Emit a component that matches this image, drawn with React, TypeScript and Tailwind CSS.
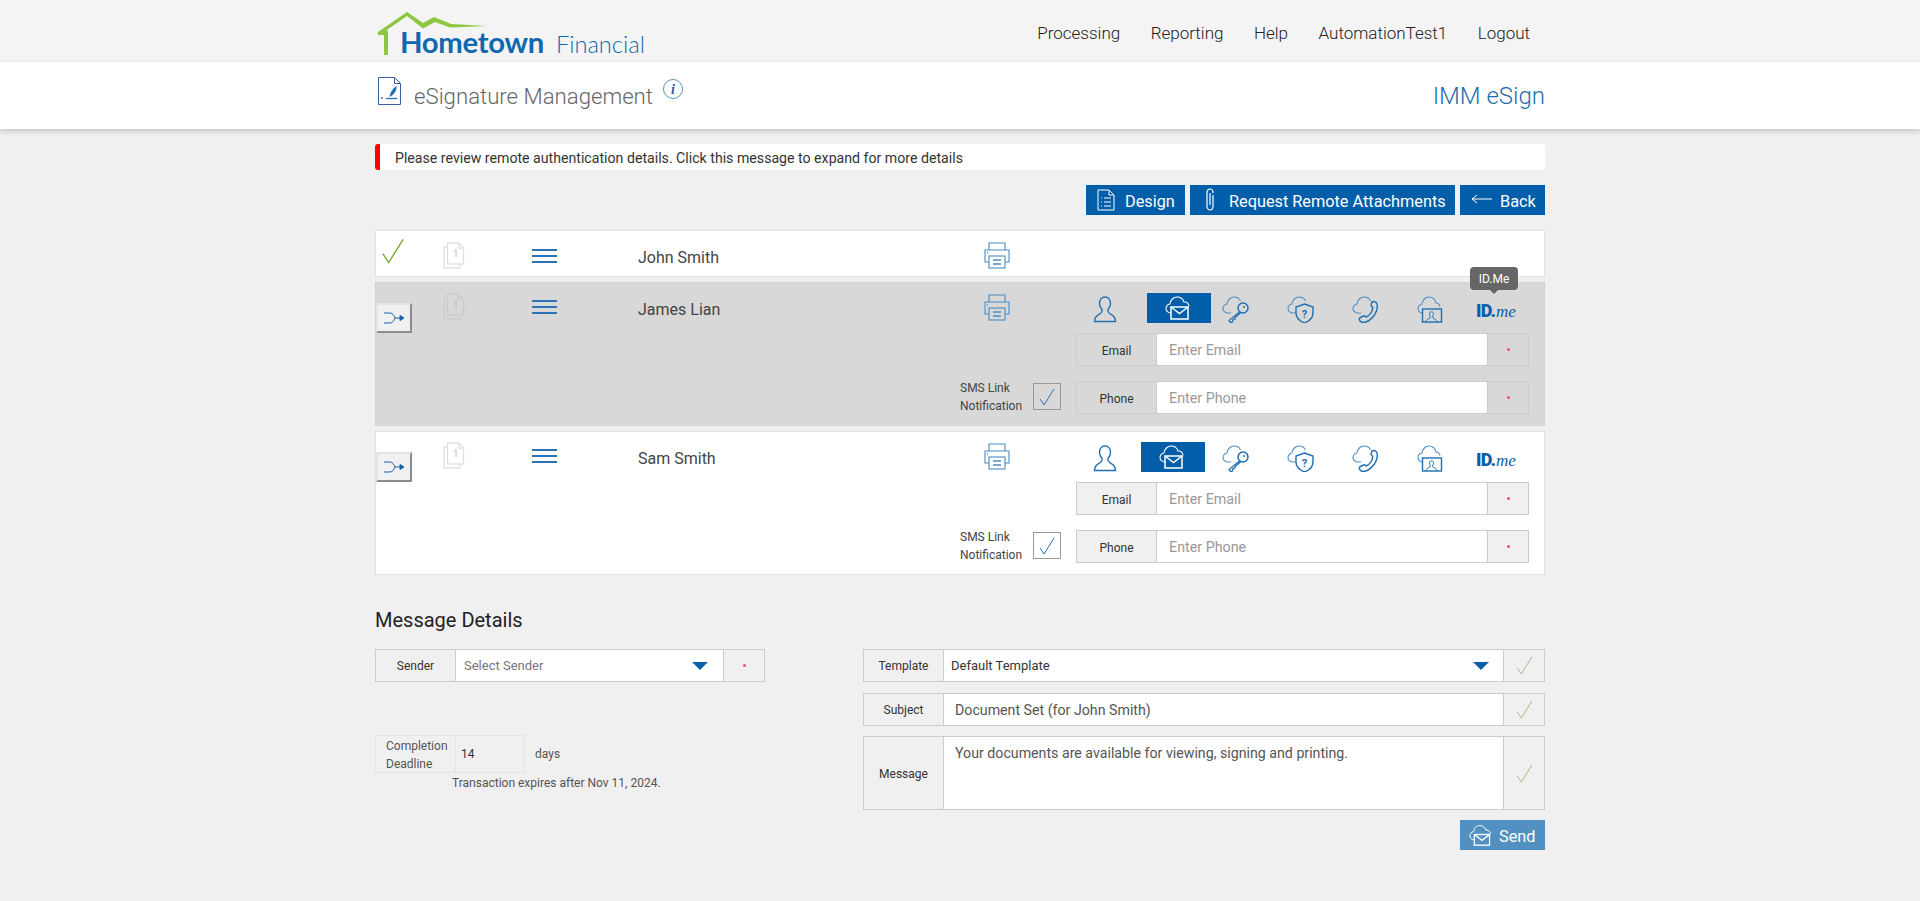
import React from 'react';

const BLUE = '#1f6fb2';
const CLOUD = '#4f8fc6';

const Doc1 = ({ color = '#e2e2e2', digit = '#d4d4d4' }: { color?: string; digit?: string }) => (
  <svg width="22" height="27" viewBox="0 0 22 27" fill="none" stroke={color} strokeWidth="1.3">
    <path d="M4.500 1h11l5 5v16h-16z" />
    <path d="M15.500 1v5h5" />
    <path d="M4.500 5H1v21h16v-4" />
    <text x="12.500" y="15" textAnchor="middle" fontSize="10" fontWeight="700" fill={digit} stroke="none" fontFamily="Roboto">1</text>
  </svg>
);

const Menu = () => (
  <div className="flex w-[25px] flex-col gap-[4px]">
    <div className="h-[2px] bg-[#2a74b5]" />
    <div className="h-[2px] bg-[#2a74b5]" />
    <div className="h-[2px] bg-[#2a74b5]" />
  </div>
);

const Printer = () => (
  <svg width="26" height="27" viewBox="0 0 26 27" fill="none" stroke="#4a8cc4" strokeWidth="1.1">
    <path d="M5 8V1h16v7" />
    <path d="M5 20H1V8h24v12h-4" />
    <rect x="5" y="14" width="16" height="12" />
    <path d="M9 18h8M9 22h8" strokeWidth="1.500" />
    <path d="M3 11h1" strokeWidth="1.500" />
  </svg>
);

const Route = () => (
  <div className="flex h-[30px] w-[36px] items-center justify-center border-2 border-t-[#e4e4e4] border-l-[#e4e4e4] border-r-[#8c8c8c] border-b-[#8c8c8c] bg-[#f0f0f0]">
    <svg width="22" height="12" viewBox="0 0 22 12" fill="none" stroke="#1a63aa" strokeWidth="1">
      <path d="M1 1h6c3 0 4 3 5 5-1 2-2 5-5 5H1" />
      <path d="M12 6h6" />
      <path d="M17 3.500l4 2.500-4 2.500z" fill="#1a63aa" />
    </svg>
  </div>
);

const Person = () => (
  <svg width="24" height="30" viewBox="0 0 24 30" fill="none" stroke={BLUE} strokeWidth="1.400">
    <path d="M12 4C8.500 4 6.500 7 6.500 10.500c0 2.500 1 4.500 2.500 6 .4 2-.5 3.500-3 4.800-2.500 1.300-4.500 2.700-4.500 7.200h21c0-4.500-2-5.900-4.500-7.200-2.500-1.300-3.400-2.800-3-4.800 1.500-1.500 2.500-3.500 2.500-6C17.500 7 15.500 4 12 4z" />
  </svg>
);

const Cloud = () => (
  <path d="M9 20H5.500C3 20 1 18 1 15.500S3 11 5 11C5.500 7 8.500 4 12 4c3 0 5.500 1.500 6.500 4" stroke={CLOUD} strokeWidth="1.100" fill="none" />
);

const CloudMail = ({ color = BLUE, fill = 'none', size = 28 }: { color?: string; fill?: string; size?: number }) => (
  <svg width={size} height={(size * 30) / 28} viewBox="0 0 28 30" fill="none">
    <path d="M6 20C3 20 1 18 1 15.500S3 11 5 11C5.500 7 8.500 4 12 4c3.500 0 6 2 7 5 3-.5 5 2 5 4.500" stroke={color} strokeWidth="1.100" />
    <rect x="6" y="14" width="17" height="12" stroke={color} strokeWidth="1.500" fill={fill} />
    <path d="M6 14l8.500 6.500L23 14" stroke={color} strokeWidth="1.500" />
  </svg>
);

const CloudKey = () => (
  <svg width="28" height="30" viewBox="0 0 28 30" fill="none">
    <Cloud />
    <circle cx="21" cy="15" r="5" stroke={BLUE} strokeWidth="1.500" />
    <circle cx="22" cy="14" r="1" fill={BLUE} />
    <path d="M17.500 19L7 27.500 8.500 29.500l2-.5.5-2.500 2-.5.500-2 5-4" stroke={BLUE} strokeWidth="1.300" />
  </svg>
);

const CloudShield = () => (
  <svg width="28" height="30" viewBox="0 0 28 30" fill="none">
    <Cloud />
    <path d="M17.500 11l8.500 3v6c0 5-3.500 8-8.500 10C12.500 28 9 25 9 20v-6z" stroke={BLUE} strokeWidth="1.400" />
    <text x="17.500" y="25" textAnchor="middle" fontSize="11" fontWeight="700" fill={BLUE} fontFamily="Roboto">?</text>
  </svg>
);

const CloudPhone = () => (
  <svg width="28" height="30" viewBox="0 0 28 30" fill="none">
    <Cloud />
    <path d="M20 9c2-1 3.500-.5 4.500 1 1.500 3 1 7-2 12-3 4-7 7-11 7.500-2 0-3.500-1-4-2.500-.5-1 0-2 1-2.500l3-1.500c1-.5 2 0 2.500 1 2-.5 4-2.500 5.500-5 1-2 1.500-3.500 1-5-1-.5-1.500-1-1.500-2z" stroke={BLUE} strokeWidth="1.400" />
  </svg>
);

const CloudUser = () => (
  <svg width="28" height="30" viewBox="0 0 28 30" fill="none">
    <path d="M5 20C3 19.500 1 18 1 15.500S3 11 5 11C5.500 7 8.500 4 12 4c3.500 0 6 2 7 6 2 0 3.500 1.500 4 3.500" stroke={CLOUD} strokeWidth="1.100" />
    <rect x="5.500" y="16" width="19" height="13" stroke={BLUE} strokeWidth="1.400" />
    <path d="M9 29c0-2.500 2-3 4-4 .5-.7.5-1 0-2-.6-1-.7-2.500-.2-3.500.5-.8 2.800-.8 3.300 0 .5 1 .4 2.500-.2 3.500-.5 1-.5 1.300 0 2 2 1 4 1.500 4 4" stroke={BLUE} strokeWidth="1" />
  </svg>
);

const IdMe = () => (
  <div className="mt-[6px] flex items-baseline text-[#0b5ea8]">
    <span className="text-[18px] font-black leading-none tracking-[-0.8px]">ID.</span>
    <span className="ml-[1px] font-['Liberation_Serif',serif] text-[17px] font-normal italic leading-none">me</span>
  </div>
);

const Check = ({ size = 19, color = '#a4b98a', weight = 1 }: { size?: number; color?: string; weight?: number }) => (
  <svg width={size} height={size} viewBox="0 0 18 18" fill="none" stroke={color} strokeWidth={(18 / size) * weight}>
    <path d="M2 11l4 6L16 1" />
  </svg>
);

const Dot = () => <div className="h-[3px] w-[3px] rounded-full bg-[#e8506c]" />;

const Caret = () => (
  <div className="h-0 w-0 border-x-[8px] border-t-[8px] border-x-transparent border-t-[#0b5ea8]" />
);

const Field = ({ label, placeholder, active }: { label: string; placeholder: string; active: boolean }) => (
  <div className="flex h-[33px] border border-[#cccccc] text-[14.3px]">
    <div className={`flex w-[80px] items-center justify-center border-r border-[#cccccc] pt-[2px] text-[12px] text-[#333333] ${active ? '' : 'bg-[#f0f0f0]'}`}>{label}</div>
    <div className="flex flex-1 items-center bg-white pl-[12px] pt-[3px] text-[#999999]">{placeholder}</div>
    <div className={`flex w-[41px] items-center justify-center border-l border-[#cccccc] ${active ? '' : 'bg-[#f0f0f0]'}`}>
      <Dot />
    </div>
  </div>
);

const Signer = ({ name, active }: { name: string; active: boolean }) => (
  <div className={`flex h-[144px] border ${active ? 'border-[#d2d2d2] bg-[#d8d8d8]' : 'border-[#e0e0e0] bg-white'}`}>
    <div className="w-[67px] pt-[20px]">
      <Route />
    </div>
    <div className="w-[89px] pt-[10px]">
      {active ? <Doc1 color="#cccccc" digit="#c6c6c6" /> : <Doc1 />}
    </div>
    <div className="w-[106px] pt-[17px]">
      <Menu />
    </div>
    <div className="w-[346px] pt-[15px] text-[16px] leading-[24px] text-[#444444]">{name}</div>
    <div className="w-[28px] pt-[11px]">
      <Printer />
    </div>
    <div className="flex flex-1 flex-col pl-[64px] pr-[15px] pt-[10px]">
      <div className="relative flex h-[30px] items-center">
        <div className="ml-[17px]"><Person /></div>
        <div className={`flex h-[30px] w-[64px] items-center justify-center bg-[#025ea8] ${active ? 'ml-[30px]' : 'ml-[24px] mr-[6px]'}`}>
          <CloudMail color="#ffffff" fill="#025ea8" />
        </div>
        <div className="ml-[11px]"><CloudKey /></div>
        <div className="ml-[37px]"><CloudShield /></div>
        <div className="ml-[37px]"><CloudPhone /></div>
        <div className="ml-[37px]"><CloudUser /></div>
        <div className="ml-[31px]"><IdMe /></div>
        {active && (
          <div className="absolute left-[394px] top-[-26px] flex h-[23px] w-[48px] items-center justify-center rounded-[4px] bg-[#666666] text-[12px] text-white">
            ID.Me
            <div className="absolute bottom-[-4px] left-[20px] h-0 w-0 border-x-[4px] border-t-[4px] border-x-transparent border-t-[#666666]" />
          </div>
        )}
      </div>
      <div className="mt-[10px]">
        <Field label="Email" placeholder="Enter Email" active={active} />
      </div>
      <div className="relative mt-[15px]">
        <Field label="Phone" placeholder="Enter Phone" active={active} />
        <div className="absolute left-[-116px] top-[-2px] text-[12px] leading-[18px] text-[#444444]">
          SMS Link
          <br />
          Notification
        </div>
        <div className="absolute left-[-43px] top-[2px] flex h-[27px] w-[28px] items-center justify-center border border-[#999999]">
          <Check size={18} color="#2a74b5" />
        </div>
      </div>
    </div>
  </div>
);

const MessageRow = ({ label, children, height = 33 }: { label: string; children: React.ReactNode; height?: number }) => (
  <div className="flex border border-[#cccccc]" style={{ height }}>
    <div className="flex w-[80px] items-center justify-center border-r border-[#cccccc] pt-[1px] text-[12px] text-[#333333]">{label}</div>
    <div className="flex-1 bg-white">{children}</div>
    <div className="flex w-[41px] items-center justify-center border-l border-[#cccccc]">
      <Check />
    </div>
  </div>
);

export default function App() {
  return (
    <div className="min-h-[901px] bg-[#f0f0f0] font-['Roboto',sans-serif]">
      {/* Top bar */}
      <div className="h-[62px] bg-[#f4f4f4]">
        <div className="mx-auto flex h-full w-[1170px] justify-between">
          <div className="relative ml-[3px] h-full w-[270px]">
            <svg className="absolute left-0 top-[11px]" width="110" height="46" viewBox="0 0 110 46" fill="none">
              <path d="M0 21L29 1l16 11 11-6 17 7 36 2-37 1.500-15-5.500-12 6.500L29 5 8 19.500h2V44H6V24H0z" fill="#8dc63f" />
            </svg>
            <div className="absolute left-[22px] top-[25px] flex items-baseline font-['Lato',sans-serif] leading-[34px] text-[#0f68b0]">
              <span className="text-[29.3px] font-bold tracking-[-0.3px]">Hometown</span>
              <span className="ml-[12px] text-[23.6px] font-light">Financial</span>
            </div>
          </div>
          <div className="flex items-start gap-[30.5px] pr-[15px] pt-[21px] text-[17px] font-light leading-[24px] text-[#222222]">
            <span>Processing</span>
            <span>Reporting</span>
            <span>Help</span>
            <span>AutomationTest1</span>
            <span>Logout</span>
          </div>
        </div>
      </div>

      {/* Title bar */}
      <div className="relative h-[67px] bg-white shadow-[0_2px_6px_rgba(0,0,0,0.2)]">
        <div className="mx-auto flex w-[1170px] justify-between">
          <div className="flex items-start">
            <svg className="ml-[3px] mt-[15px]" width="23" height="28" viewBox="0 0 23 28" fill="none">
              <path d="M.5.5h16l6 6v21H.5z" stroke="#3a5fa8" />
              <path d="M16.500.5v6h6" stroke="#3a5fa8" />
              <path d="M8 21.500h11" stroke="#1f6fb2" strokeWidth="1.300" />
              <path d="M11.500 20c.5-5 4-9 7-11 .5 4-2.500 9-7 11z" fill="#1f6fb2" />
              <path d="M3 20l2 2M5 20l-2 2" stroke="#555555" strokeWidth=".7" />
            </svg>
            <div className="ml-[13px] mt-[18px] text-[22.2px] font-light leading-[32px] text-[#666666]">eSignature Management</div>
            <div className="ml-[10px] mt-[17px] flex h-[20px] w-[20px] items-center justify-center rounded-full border border-[#5d93c4] font-['Liberation_Serif',serif] text-[14px] font-bold italic text-[#1f5f9f]">i</div>
          </div>
          <div className="mt-[17px] text-[24px] font-light leading-[34px] text-[#1f6cae]">IMM eSign</div>
        </div>
      </div>

      <div className="mx-auto w-[1170px]">
        {/* Alert */}
        <div className="mt-[15px] flex h-[26px] items-center rounded-[3px] border-l-[5px] border-[#ff0000] bg-white pl-[15px] pt-[4px] text-[14.15px] text-[#333333]">
          Please review remote authentication details. Click this message to expand for more details
        </div>

        {/* Action buttons */}
        <div className="mt-[15px] flex justify-end gap-[5px] text-[16.3px] text-white">
          <div className="flex h-[30px] w-[99px] items-center bg-[#025ea8] pl-[11px]">
            <svg width="18" height="22" viewBox="0 0 18 22" fill="none" stroke="#ffffff" strokeWidth="1">
              <path d="M1 1h11l5 5v15H1z" />
              <path d="M12 1v5h5" />
              <path d="M4 9h1M7 9h7M4 13h1M7 13h7M4 17h1M7 17h7" />
            </svg>
            <span className="ml-[10px] pt-[5px]">Design</span>
          </div>
          <div className="flex h-[30px] w-[265px] items-center bg-[#025ea8] pl-[15px]">
            <svg width="11" height="24" viewBox="0 0 11 24" fill="none" stroke="#ffffff" strokeWidth="1.200">
              <path d="M8 7v11c0 2-1 4-3 4s-3-2-3-4V5c0-2 1-4 3-4s3 2 3 4" />
              <path d="M5 5v12" />
            </svg>
            <span className="ml-[13px] whitespace-nowrap pt-[5px]">Request Remote Attachments</span>
          </div>
          <div className="flex h-[30px] w-[85px] items-center bg-[#025ea8] pl-[11px]">
            <svg width="21" height="12" viewBox="0 0 21 12" fill="none" stroke="#ffffff" strokeWidth="1">
              <path d="M21 5H1M6 1L1 5l5 4" />
            </svg>
            <span className="ml-[8px] pt-[5px]">Back</span>
          </div>
        </div>

        {/* Signers */}
        <div className="mt-[15px] flex h-[47px] border border-[#e0e0e0] bg-white">
          <div className="w-[67px] pl-[4px] pt-[7px]">
            <Check size={26} color="#74ad2f" weight={1.4} />
          </div>
          <div className="w-[89px] pt-[11px]">
            <Doc1 />
          </div>
          <div className="w-[106px] pt-[18px]">
            <Menu />
          </div>
          <div className="w-[346px] pt-[15px] text-[16px] leading-[24px] text-[#444444]">John Smith</div>
          <div className="pt-[11px]">
            <Printer />
          </div>
        </div>
        <div className="mt-[5px]">
          <Signer name="James Lian" active />
        </div>
        <div className="mt-[5px]">
          <Signer name="Sam Smith" active={false} />
        </div>

        {/* Message details */}
        <div className="mt-[30px] text-[20px] leading-[30px] text-[#222222]">Message Details</div>
        <div className="mt-[14px] flex justify-between">
          <div className="w-[390px]">
            <div className="flex h-[33px] border border-[#cccccc]">
              <div className="flex w-[80px] items-center justify-center border-r border-[#cccccc] pt-[1px] text-[12px] text-[#333333]">Sender</div>
              <div className="flex flex-1 items-center justify-between bg-white pl-[8px] pr-[15px] text-[13px] text-[#777777]">
                Select Sender
                <Caret />
              </div>
              <div className="flex w-[41px] items-center justify-center border-l border-[#cccccc]">
                <Dot />
              </div>
            </div>
            <div className="mt-[53px] flex items-center">
              <div className="flex h-[38px] w-[150px] border border-[#e4e4e4] text-[12px] leading-[18px]">
                <div className="flex w-[80px] items-center border-r border-[#e4e4e4] pl-[10px] pt-[1px] text-[#555555]">
                  <div className="w-[64px]">Completion Deadline</div>
                </div>
                <div className="flex flex-1 items-center pl-[5px] text-[#333333]">14</div>
              </div>
              <span className="ml-[10px] text-[12px] text-[#555555]">days</span>
            </div>
            <div className="ml-[77px] mt-[2px] text-[12px] leading-[16px] text-[#555555]">Transaction expires after Nov 11, 2024.</div>
          </div>
          <div className="w-[682px]">
            <MessageRow label="Template">
              <div className="flex h-full items-center justify-between pl-[7px] pr-[14px] text-[13px] text-[#333333]">
                Default Template
                <Caret />
              </div>
            </MessageRow>
            <div className="mt-[11px]">
              <MessageRow label="Subject">
                <div className="flex h-full items-center pl-[11px] pt-[2px] text-[14.2px] text-[#555555]">Document Set (for John Smith)</div>
              </MessageRow>
            </div>
            <div className="mt-[10px]">
              <MessageRow label="Message" height={74}>
                <div className="pl-[11px] pt-[6px] text-[14.2px] leading-[20px] text-[#555555]">Your documents are available for viewing, signing and printing.</div>
              </MessageRow>
            </div>
            <div className="mt-[10px] flex justify-end">
              <div className="flex h-[30px] w-[85px] items-center bg-[#5290c2] pl-[9px] text-[16.3px] text-white">
                <CloudMail color="#ffffff" fill="#5290c2" size={25} />
                <span className="ml-[5px] pt-[4px]">Send</span>
              </div>
            </div>
          </div>
        </div>
      </div>
    </div>
  );
}
